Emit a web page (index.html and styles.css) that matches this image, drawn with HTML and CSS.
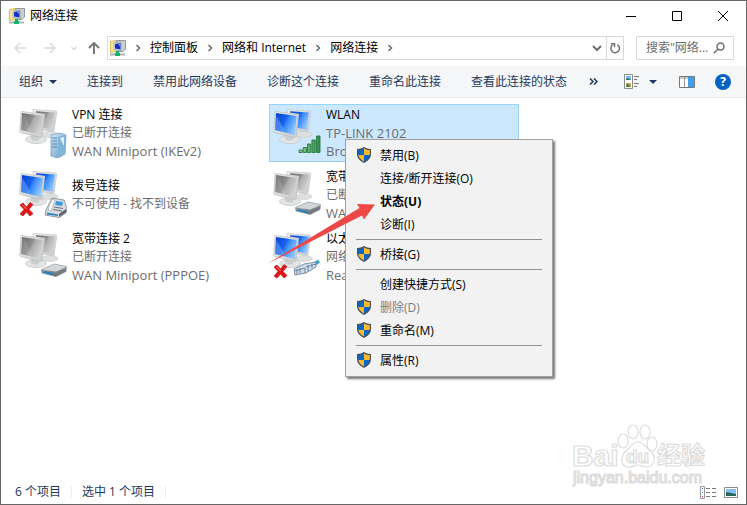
FILE: index.html
```html
<!DOCTYPE html>
<html lang="zh-CN">
<head>
<meta charset="utf-8">
<meta name="viewport" content="width=device-width, initial-scale=1">
<title>网络连接</title>
<link rel="stylesheet" href="styles.css">
</head>
<body>
<svg class="defs" aria-hidden="true">
  <defs>
    <linearGradient id="frame" x1="0" y1="0" x2="1" y2="1"><stop offset="0" stop-color="#f0f0f0"/><stop offset="1" stop-color="#c9cbcc"/></linearGradient>
    <linearGradient id="grey" x1="0" y1="0" x2="1" y2="0.5"><stop offset="0" stop-color="#666"/><stop offset=".5" stop-color="#8e8e8e"/><stop offset=".6" stop-color="#adadad"/><stop offset="1" stop-color="#d2d2d2"/></linearGradient>
    <linearGradient id="blue" x1="0" y1="0" x2="1" y2="0.5"><stop offset="0" stop-color="#0a3fc8"/><stop offset=".5" stop-color="#1763ee"/><stop offset=".62" stop-color="#3b8bfb"/><stop offset="1" stop-color="#8cc4ff"/></linearGradient>
    <linearGradient id="tower" x1="0" y1="0" x2="1" y2="1"><stop offset="0" stop-color="#d8ecf8"/><stop offset="1" stop-color="#5f97c4"/></linearGradient>
    <linearGradient id="bar" x1="0" y1="0" x2="1" y2="0"><stop offset="0" stop-color="#8fd09a"/><stop offset="1" stop-color="#2f8a4b"/></linearGradient>
    <linearGradient id="metal" x1="0" y1="0" x2="0" y2="1"><stop offset="0" stop-color="#d5d5d5"/><stop offset="1" stop-color="#5f6468"/></linearGradient>
  </defs>
  <symbol id="stand" viewBox="0 0 48 50">
    <ellipse cx="31" cy="26.500" rx="8" ry="3" fill="#dedfdf" stroke="#c6c8ca" stroke-width=".6"/>
    <path d="M14 1.500 37 3Q38 3.200 37.800 4.200L35 22.500Q34.800 23.800 33.500 23.500L16 21Z" fill="url(#frame)" stroke="#c3c5c7" stroke-width=".7"/>
    <ellipse cx="17" cy="31.500" rx="10.500" ry="4" fill="#e3e4e4" stroke="#c0c2c4" stroke-width=".7"/>
    <path d="M12 26 20 28 20 32Q15 34 12 31Z" fill="#cbcdce"/>
    <path d="M2 4Q1.500 3.500 3 3.500L24 6.500Q25.500 6.800 25.200 8L23 28.500Q22.500 30 21 29.500L1.500 24.500Q.5 24 .8 22.500Z" fill="url(#frame)" stroke="#b9bbbd" stroke-width=".7"/>
  </symbol>
  <symbol id="pc-grey" viewBox="0 0 48 50">
    <use href="#stand"/>
    <path d="M17 3.200 36 4.500 33.500 21.500 24.500 20 26 6 17 4.500Z" fill="url(#grey)"/>
    <path d="M3 5 23.800 8 21.500 27 2.200 22Z" fill="url(#grey)"/>
    <path d="M3.500 6 6 6.500 12 22 12 24.500 2.500 22Z" fill="#fff" opacity=".13"/>
  </symbol>
  <symbol id="pc-blue" viewBox="0 0 48 50">
    <use href="#stand"/>
    <path d="M17 3.200 36 4.500 33.500 21.500 24.500 20 26 6 17 4.500Z" fill="url(#blue)"/>
    <path d="M3 5 23.800 8 21.500 27 2.200 22Z" fill="url(#blue)"/>
    <path d="M3.500 8 11 21 11 24.300 2.200 22Z" fill="#8cc2ff" opacity=".4"/>
  </symbol>
  <symbol id="server" viewBox="0 0 48 50">
    <path d="M32 27 41 25 47 27 46 46 39 50 32 48Z" fill="url(#tower)" stroke="#6f9fc4" stroke-width=".8"/>
    <path d="M39 29 47 27 46 46 39 50Z" fill="#82b3d8"/>
    <path d="M33 30h5M33 33h5M33 36h5M33 39h5" stroke="#4c86b4"/>
    <path d="M41 30 45 38 45 29Z" fill="#e4f4fc"/>
  </symbol>
  <symbol id="modem" viewBox="0 0 48 50">
    <path d="M22.500 37.500 35 32 47.500 34.500 47 39.500 37 44.500 23 41Z" fill="url(#metal)" stroke="#7b8084" stroke-width=".6"/>
    <path d="M23 37.500 35 32.500 47 34.800 37 39.500Z" fill="#d3d6d8"/>
    <path d="M25 39 35 41 35 43 25 41Z" fill="#2188c4"/>
    <path d="M37 40.500 47 36V39L37 44Z" fill="#74797d"/>
  </symbol>
  <symbol id="phone" viewBox="0 0 48 50">
    <path d="M27 40 33 28 45 30 48 38 47 43 40 47.500 26 45Z" fill="#d8dce0" stroke="#7c858c" stroke-width=".8"/>
    <path d="M29 40 33 29 36 30 32 41Z" fill="#fff" stroke="#949ba0" stroke-width=".6"/>
    <path d="M37 31 44 32 43 36 36 35Z" fill="#3c9be0"/>
    <path d="M35 37 44 38.500M34 39.500 43 41" stroke="#6b747b"/>
    <path d="M28 42.500 39 44.500 39 46 28 44.500Z" fill="#2485bd"/>
    <path d="M40 44 47 39 47 42.500 40 47Z" fill="#5e666c"/>
  </symbol>
  <symbol id="signal" viewBox="0 0 48 50">
    <g fill="url(#bar)" stroke="#26783f" stroke-width=".9">
      <path d="M26 44.500V42h3.200v2.500zM30.200 44.500V39.500h3.200v5zM34.500 44.500V36h3.200v8.500zM38.900 44.500V32h3.300v12.500zM43.500 44.500V28h3.500v16.500z"/>
    </g>
  </symbol>
  <symbol id="plug" viewBox="0 0 48 50">
    <path d="M36 36 46 29" stroke="#35a5d8" stroke-width="3.500"/>
    <path d="M21 37 31 32 43 30 43 35 33 41 22 43Z" fill="#cfdde8" stroke="#6b8499" stroke-width=".9"/>
    <path d="M22 39 32 36 32 41M24 37v5M27 36v5M33 35 43 32M35 33v6M39 32v4" fill="none" stroke="#607f98" stroke-width=".9"/>
  </symbol>
  <symbol id="cross" viewBox="0 0 48 50">
    <path d="M1 35 4 33 7.500 37 11 32.500 14 34.500 10 39.500 14 43.500 11 46 7.500 42 4 46 1 44 5 39.500Z" fill="#e31515" stroke="#a80b0b" stroke-width=".6"/>
    <path d="M3.500 35 7.500 39" stroke="#ff8b83" stroke-width="1"/>
  </symbol>
  <symbol id="shield" viewBox="0 0 14 16">
    <path d="M7 .5Q10 2.500 13.500 2.500V7Q13.500 12 7 15.500Q.5 12 .5 7V2.500Q4 2.500 7 .5Z" fill="#0b67c6"/>
    <path d="M7 1Q10 3 13 3V8H7ZM1 8H7V15Q1.500 12 1 8Z" fill="#fdb92e"/>
    <path d="M7 .7Q10 2.600 13.400 2.600V7Q13.400 12 7 15.300Q.6 12 .6 7V2.600Q4 2.600 7 .7Z" fill="none" stroke="#4c5157" stroke-width="1.200"/>
  </symbol>
  <symbol id="netfolder" viewBox="0 0 16 16">
    <path d="M.5 1.500 6 .5V11.500L.5 12.500Z" fill="#f9e69a" stroke="#d8bd5b"/>
    <path d="M6.500.5H15.500V9L13 11.500H8Z" fill="#c9ced3" stroke="#949a9f"/>
    <path d="M4 3 11 2V10.500L4 9.500Z" fill="#e5e9ee" stroke="#8b98a5" stroke-width=".7"/>
    <path d="M5 4 10.500 3V9.500L5 8.500Z" fill="#1730c8"/>
    <path d="M8 4 10 3.500V6.500Z" fill="#73a2f3"/>
    <path d="M0 14.500H15" stroke="#aab5b5" stroke-width="2"/>
    <path d="M7.500 11V14M5 14.500H10" stroke="#15b26c" stroke-width="3"/>
  </symbol>
  <symbol id="crumb" viewBox="0 0 6 8"><path d="M1.500 1 4.500 4 1.500 7" fill="none" stroke="#6d6d6d" stroke-width="1.500"/></symbol>
  <symbol id="caret" viewBox="0 0 8 4"><path d="M0 0H8L4 4Z" fill="#1e395b"/></symbol>
</svg>

<main class="window">
  <header class="titlebar">
    <svg class="i16"><use href="#netfolder"/></svg>
    <h1>网络连接</h1>
    <div class="controls">
      <button aria-label="最小化"><svg viewBox="0 0 10 10"><path d="M0 5.500H10"/></svg></button>
      <button aria-label="最大化"><svg viewBox="0 0 10 10"><path d="M.5.5H9.500V9.500H.5Z"/></svg></button>
      <button aria-label="关闭"><svg viewBox="0 0 10 10"><path d="M0 0 10 10M10 0 0 10"/></svg></button>
    </div>
  </header>

  <nav class="navbar">
    <button class="faint" aria-label="后退"><svg viewBox="0 0 12 12"><path d="M12 6H1M6 1 1 6 6 11"/></svg></button>
    <button class="faint" aria-label="前进"><svg viewBox="0 0 12 12"><path d="M0 6H11M6 1 11 6 6 11"/></svg></button>
    <button class="faint recent" aria-label="最近浏览的位置"><svg viewBox="0 0 12 12"><path d="M3.500 5 6 7.500 8.500 5"/></svg></button>
    <button class="up" aria-label="上移"><svg viewBox="0 0 12 12"><path d="M6 12V1M1 6 6 1 11 6"/></svg></button>
    <div class="address">
      <svg class="i16"><use href="#netfolder"/></svg>
      <svg class="crumb"><use href="#crumb"/></svg>
      <a href="#">控制面板</a>
      <svg class="crumb"><use href="#crumb"/></svg>
      <a href="#">网络和 Internet</a>
      <svg class="crumb"><use href="#crumb"/></svg>
      <a href="#">网络连接</a>
      <svg class="crumb"><use href="#crumb"/></svg>
      <button class="history" aria-label="以前的位置"><svg viewBox="0 0 12 12"><path d="M2 4 6 8 10 4"/></svg></button>
      <button class="refresh" aria-label="刷新"><svg viewBox="0 0 12 12"><path d="M8.300 2.600A4.300 4.300 0 1 1 3.500 3M2 1.800H5.500V5.300"/></svg></button>
    </div>
    <label class="search">
      <input type="text" aria-label="搜索网络连接" placeholder='搜索"网络...'>
      <svg viewBox="0 0 12 12"><circle cx="7.500" cy="4.500" r="3.500"/><path d="M5 7 .8 11.200"/></svg>
    </label>
  </nav>

  <div class="toolbar">
    <button>组织<svg class="caret"><use href="#caret"/></svg></button>
    <button>连接到</button>
    <button>禁用此网络设备</button>
    <button>诊断这个连接</button>
    <button>重命名此连接</button>
    <button>查看此连接的状态</button>
    <button class="more" aria-label="更多"><svg viewBox="0 0 9 7"><path d="M1 .5 4 3.500 1 6.500M5 .5 8 3.500 5 6.500"/></svg></button>
    <div class="views">
      <button class="layout" aria-label="更改视图"><svg width="16" height="16" viewBox="0 0 16 16"><path d="M.5.500H8.500V14.500H.5Z" fill="#fff" stroke="#8b8b8b"/><path d="M2 2H7V6H2Z" fill="#7db9ee"/><path d="M2 5 4 4 7 6H2Z" fill="#31784b"/><path d="M2 9H7V13H2Z" fill="#e7b862"/><path d="M2 11 4 9 7 13H2Z" fill="#56833f"/><path d="M10 2.500H15M10 5.500H13M10 9.500H15M10 12.500H13" stroke="#777"/></svg><svg class="caret"><use href="#caret"/></svg></button>
      <button aria-label="预览窗格"><svg width="16" height="12" viewBox="0 0 16 12"><path d="M.5.500H15.500V11.500H.5Z" fill="#fff" stroke="#777"/><path d="M1 2H9M5.500 1V11" stroke="#999"/><path d="M9 1H15V11H9Z" fill="#43a0e8"/></svg></button>
      <button class="help" aria-label="帮助">?</button>
    </div>
  </div>

  <section class="content">
    <ul class="connections">
      <li class="connection">
        <span class="icon"><svg><use href="#pc-grey"/><use href="#server"/></svg></span>
        <div><h2>VPN 连接</h2><p>已断开连接</p><p class="device">WAN Miniport (IKEv2)</p></div>
      </li>
      <li class="connection">
        <span class="icon"><svg><use href="#pc-blue"/><use href="#phone"/><use href="#cross"/></svg></span>
        <div><h2>拨号连接</h2><p>不可使用 - 找不到设备</p></div>
      </li>
      <li class="connection">
        <span class="icon"><svg><use href="#pc-grey"/><use href="#modem"/></svg></span>
        <div><h2>宽带连接 2</h2><p>已断开连接</p><p class="device">WAN Miniport (PPPOE)</p></div>
      </li>
      <li class="connection selected">
        <span class="icon"><svg><use href="#pc-blue"/><use href="#signal"/></svg></span>
        <div><h2>WLAN</h2><p class="device">TP-LINK 2102</p><p class="device">Bro</p></div>
      </li>
      <li class="connection">
        <span class="icon"><svg><use href="#pc-grey"/><use href="#modem"/></svg></span>
        <div><h2>宽带</h2><p>已断</p><p class="device">WAN</p></div>
      </li>
      <li class="connection">
        <span class="icon"><svg><use href="#pc-blue"/><use href="#plug"/><use href="#cross"/></svg></span>
        <div><h2>以太</h2><p>网络</p><p class="device">Real</p></div>
      </li>
    </ul>

    <div class="menu" role="menu">
      <button role="menuitem"><svg><use href="#shield"/></svg>禁用(B)</button>
      <button role="menuitem">连接/断开连接(O)</button>
      <button role="menuitem" class="default">状态(U)</button>
      <button role="menuitem">诊断(I)</button>
      <hr>
      <button role="menuitem"><svg><use href="#shield"/></svg>桥接(G)</button>
      <hr>
      <button role="menuitem">创建快捷方式(S)</button>
      <button role="menuitem" disabled><svg><use href="#shield"/></svg>删除(D)</button>
      <button role="menuitem"><svg><use href="#shield"/></svg>重命名(M)</button>
      <hr>
      <button role="menuitem"><svg><use href="#shield"/></svg>属性(R)</button>
    </div>

    <svg class="pointer" viewBox="0 0 108 60" aria-hidden="true"><path d="M0 60 92.500 4 90 0 108 .5 97 15.500 95 11.500Z" fill="#ec4848"/></svg>
  </section>

  <svg class="watermark" viewBox="0 0 140 66">
    <g fill="#fff" stroke="#dcdcdc" stroke-width="1.200">
      <text x="0" y="42" class="wm-large">Bai</text>
      <ellipse cx="51" cy="17" rx="5" ry="7"/>
      <ellipse cx="61" cy="8" rx="5" ry="7"/>
      <ellipse cx="73" cy="8" rx="5" ry="7"/>
      <ellipse cx="80" cy="20" rx="5" ry="7"/>
      <path d="M66 18C72 18 74 24 78 27C85 32 83 42 75 43C71 43 69 41 66 41C62 41 59 44 55 43C48 41 48 32 54 27C58 24 60 18 66 18Z"/>
      <text x="54" y="39" class="wm-du">du</text>
      <text x="85" y="40" class="wm-cn">经验</text>
      <text x="1" y="59" class="wm-url">jingyan.baidu.com</text>
    </g>
  </svg>

  <footer class="status">
    <span>6 个项目</span>
    <span>选中 1 个项目</span>
    <div class="modes">
      <button aria-label="详细信息"><svg width="16" height="13" viewBox="0 0 16 13"><path d="M.5.500H4.500V12.500H.5Z" fill="#fff" stroke="#999"/><path d="M2 2H3V3H2ZM2 6H3V7H2Z" fill="#357dcc"/><path d="M2 10H3V11H2Z" fill="#d23a2e"/><path d="M6 2.500H10M12 2.500H16M6 6.500H10M12 6.500H16M6 10.500H10M12 10.500H16" stroke="#777"/></svg></button>
      <button aria-label="大图标"><svg width="14" height="11" viewBox="0 0 14 11"><path d="M.5.500H13.500V10.500H.5Z" fill="#fff" stroke="#8b8b8b"/><path d="M2 2H12V9H2Z" fill="#84bff5"/><path d="M2 5 7 6 12 7V9H2Z" fill="#24665e"/></svg></button>
    </div>
  </footer>
</main>
</body>
</html>
```
FILE: styles.css
```css
* { box-sizing: border-box; }

body {
  margin: 0;
  color: #000;
  font: 12px/18px "Open Sans", "Noto Sans CJK SC", sans-serif;
}

button {
  display: flex;
  align-items: center;
  padding: 0;
  border: 0;
  background: none;
  color: inherit;
  font: inherit;
  white-space: nowrap;
}

h1, h2, p, ul { margin: 0; padding: 0; font: inherit; }
svg { display: block; flex: none; }

.defs { position: absolute; width: 0; height: 0; }
.i16 { width: 16px; height: 16px; }
.caret { width: 8px; height: 4px; }

.window {
  position: relative;
  display: flex;
  flex-direction: column;
  min-height: 100vh;
  border: 1px solid #666;
  background: #fff;
}

.titlebar {
  display: flex;
  align-items: center;
  gap: 5px;
  height: 29px;
  padding-left: 8px;
}

.controls { display: flex; margin-left: auto; }
.controls button { justify-content: center; width: 46px; height: 29px; }
.controls svg { width: 10px; height: 10px; overflow: visible; fill: none; stroke: #000; }

.navbar {
  display: flex;
  align-items: center;
  height: 36px;
  padding: 0 12px 0 13px;
}

.navbar svg { fill: none; }
.navbar > button { width: 30px; color: #777; }
.navbar > button svg { width: 12px; height: 12px; stroke: currentColor; stroke-width: 2; }
.navbar > .faint { color: #d9d9d9; }
.navbar > .faint svg { stroke-width: 1.5; }
.navbar > .recent { width: 14px; margin-left: -6px; margin-right: 6px; }
.navbar > .up { width: 19px; }

.address {
  display: flex;
  flex: 1;
  align-items: center;
  height: 24px;
  padding-left: 2px;
  border: 1px solid #d9d9d9;
}

.address a { color: #000; text-decoration: none; white-space: nowrap; }
.crumb { width: 6px; height: 8px; margin: 0 9px; }
.address button { height: 22px; justify-content: center; }
.address button svg { width: 12px; height: 12px; stroke: #6d6d6d; stroke-width: 2; }
.history { width: 18px; margin-left: auto; }
.address .refresh { width: 17px; border-left: 1px solid #d9d9d9; }
.address .refresh svg { stroke-width: 1.5; }

.search {
  display: flex;
  align-items: center;
  width: 98px;
  height: 24px;
  margin-left: 12px;
  padding: 0 8px 0 9px;
  border: 1px solid #d9d9d9;
}

.search input {
  flex: 1;
  min-width: 0;
  padding: 0;
  border: 0;
  outline: 0;
  background: none;
  font: inherit;
}

.search input::placeholder { color: #6d6d6d; opacity: 1; }
.search svg { width: 12px; height: 12px; stroke: #6d6d6d; stroke-width: 1.5; }

.toolbar {
  display: flex;
  align-items: center;
  gap: 30px;
  height: 32px;
  padding: 0 15px 0 18px;
  border-bottom: 1px solid #e6e8eb;
  background: #f5f6f7;
  color: #1e395b;
}

.toolbar button { gap: 6px; }
.more { margin: 0 -8px; }
.more svg { width: 9px; height: 7px; fill: none; stroke: #1e395b; stroke-width: 1.5; }
.views { display: flex; align-items: center; gap: 20px; margin-left: auto; }
.views .layout { gap: 9px; margin-right: 2px; }

.toolbar .help {
  justify-content: center;
  width: 16px;
  height: 16px;
  border-radius: 50%;
  background: #0563c1;
  color: #fff;
  font-weight: 700;
}

.content { position: relative; flex: 1; padding: 6px 0 0 14px; }

.connections {
  display: grid;
  grid-template-rows: repeat(3, 58px);
  grid-auto-columns: 250px;
  grid-auto-flow: column;
  gap: 4px;
  list-style: none;
}

.connection {
  display: flex;
  align-items: center;
  gap: 5px;
  padding-left: 3px;
  border: 1px solid transparent;
}

.connection.selected { border-color: #99d1ff; background: #cce8ff; }
.connection p { color: #6d6d6d; }
.connection .device { font-size: 13px; }
.icon svg { width: 48px; height: 50px; }

.menu {
  position: absolute;
  top: 41px;
  left: 344px;
  width: 208px;
  padding: 4px 0;
  border: 1px solid #a0a0a0;
  background: #f2f2f2;
  box-shadow: 2px 2px 2px #777;
}

.menu button { position: relative; width: 100%; height: 23px; padding-left: 34px; }
.menu button svg { position: absolute; top: 3px; left: 11px; width: 14px; height: 16px; }
.menu button:disabled { color: #7d7d7d; }
.menu .default { font-weight: 700; }
.menu hr { height: 1px; margin: 3px 10px; border: 0; background: #919191; }

.pointer { position: absolute; top: 106px; left: 266px; width: 108px; height: 60px; }

.watermark {
  position: absolute;
  right: 34px;
  bottom: 14px;
  width: 140px;
  height: 66px;
  font-family: "Liberation Sans", "Noto Sans CJK SC", sans-serif;
  font-weight: 700;
}

.wm-large { font-size: 30px; }
.wm-du { font-size: 19px; }
.wm-cn { font-size: 24px; }
.wm-url { font-size: 16px; font-weight: 400; }

.status {
  display: flex;
  align-items: center;
  height: 24px;
  padding: 0 8px 0 14px;
  color: #1e395b;
}

.status span { margin-right: 10px; padding-right: 10px; border-right: 1px solid #eee; line-height: 12px; }
.modes { display: flex; align-items: center; gap: 8px; margin-left: auto; }
```
